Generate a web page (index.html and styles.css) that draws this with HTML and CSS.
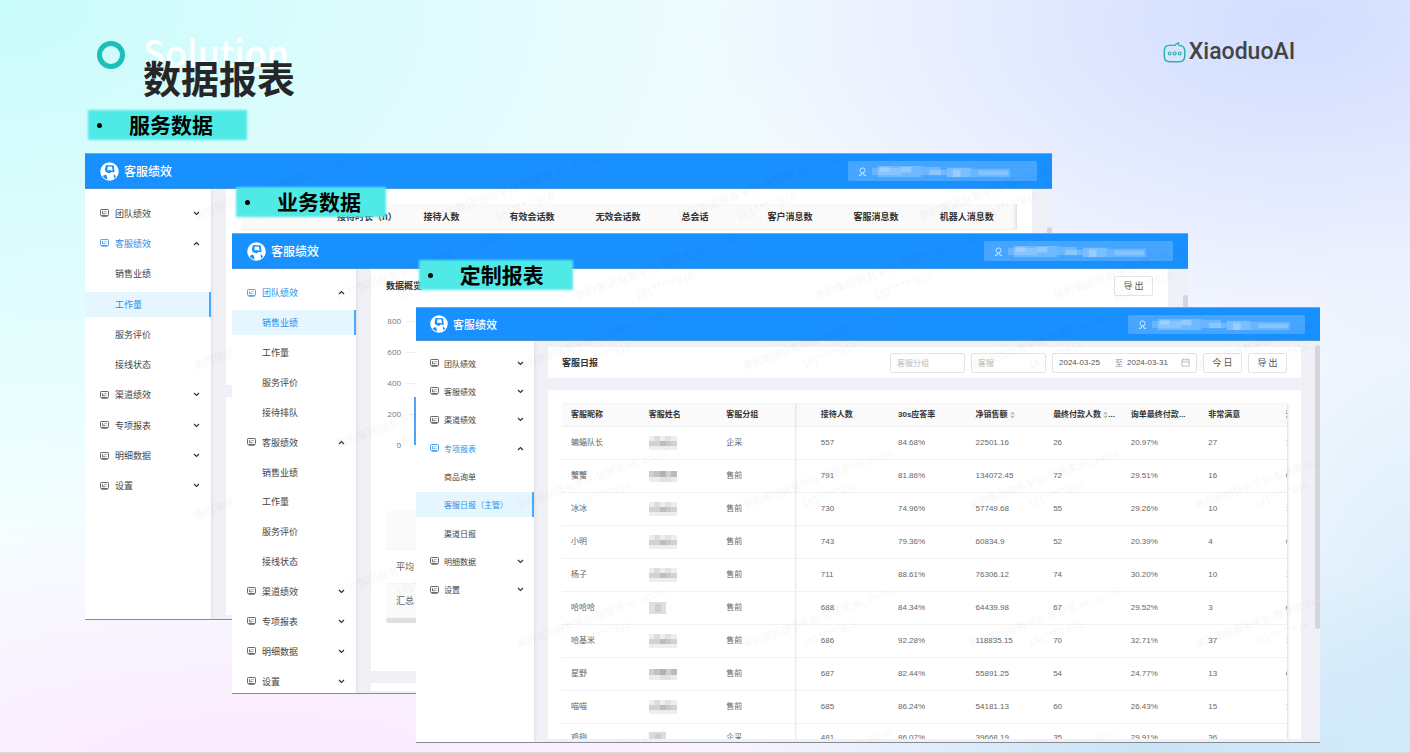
FILE: index.html
```html
<!DOCTYPE html>
<html lang="zh-CN">
<head>
<meta charset="utf-8">
<title>数据报表</title>
<link rel="stylesheet" href="styles.css">
</head>
<body>
<svg class="defs" aria-hidden="true">
  <symbol id="i-menu" viewBox="0 0 18 16"><rect x="1" y="1" width="16" height="12" rx="1.5" fill="none" stroke="currentColor" stroke-width="1.6"/><path d="M5 4v6M5 9.6h5M8 7l2-2.5M12 4v2M12 8v2M3 15.2h12" fill="none" stroke="currentColor" stroke-width="1.4"/></symbol>
  <symbol id="i-down" viewBox="0 0 8 6"><path d="M1 1.2l3 3 3-3" fill="none" stroke="currentColor" stroke-width="1.4"/></symbol>
  <symbol id="i-up" viewBox="0 0 8 6"><path d="M1 4.8l3-3 3 3" fill="none" stroke="currentColor" stroke-width="1.4"/></symbol>
  <symbol id="i-user" viewBox="0 0 10 10"><circle cx="5" cy="3.8" r="2.8" fill="none" stroke="currentColor"/><path d="M1 9.3h2.3L4 6.6M9 9.3H6.700L6 6.600" fill="none" stroke="currentColor"/></symbol>
  <symbol id="i-brand" viewBox="0 0 20 20"><circle cx="10" cy="10" r="9.700" fill="#fff"/><path d="M6.300 3.200l8.200.5.9 7.200-3.700-.3-1.500 1.600-4.200-1.600-.9-2.800z" fill="#1890ff"/><path d="M8.200 4.700l4.400.4.7 4-3-.6-2.500.5z" fill="#fff"/><path d="M2.800 14.800l3.300-1.600 1.100 1.500.6 3.800c-2.100-.6-3.900-1.900-5-3.700zM14.200 12.600l2.700 2.300c-.6.900-1.300 1.600-2.100 2.200z" fill="#1890ff"/></symbol>
  <symbol id="i-cal" viewBox="0 0 10 10"><rect x="1" y="2" width="8" height="7" fill="none" stroke="currentColor"/><path d="M1 4.500h8M3 .5v2M7 .5v2" stroke="currentColor"/></symbol>
  <symbol id="i-sort" viewBox="0 0 5 8"><path d="M0 3.200L2.500.5 5 3.200zM0 4.800L2.500 7.500 5 4.800z" fill="#bbb"/></symbol>
  <symbol id="m-wide" viewBox="0 0 28 14"><rect width="28" height="14" fill="#eee"/><rect x="5" width="6" height="5" fill="#ddd"/><rect x="16" width="6" height="5" fill="#e2e2e2"/><rect y="5" width="28" height="5" fill="#d2d2d2"/><rect x="11" y="5" width="6" height="5" fill="#bdbdbd"/><rect x="17" y="5" width="5" height="5" fill="#c8c8c8"/></symbol>
  <symbol id="m-dark" viewBox="0 0 28 14"><rect y="2" width="28" height="6" fill="#cfcfcf"/><rect x="5" y="2" width="6" height="6" fill="#c2c2c2"/><rect x="11" y="2" width="6" height="6" fill="#b2b2b2"/><rect x="22" y="2" width="6" height="6" fill="#bbb"/><rect y="8" width="28" height="5" fill="#ececec"/><rect x="11" y="8" width="11" height="5" fill="#e1e1e1"/></symbol>
  <symbol id="m-short" viewBox="0 0 28 14"><rect y="1" width="17" height="12" fill="#dedede"/><rect x="6" y="3" width="6" height="8" fill="#cecece"/></symbol>
  <symbol id="m-user" viewBox="0 0 140 12" preserveAspectRatio="none"><g fill="#fff"><rect x="6" width="44" height="12" opacity=".22"/><rect y="2" width="30" height="8" opacity=".18"/><rect x="8" y="1" width="10" height="5" opacity=".2"/><rect x="30" y="1" width="10" height="6" opacity=".25"/><rect x="50" y="1" width="20" height="9" opacity=".2"/><rect x="58" y="4" width="18" height="6" opacity=".22"/><rect x="76" y="2" width="24" height="10" opacity=".28"/><rect x="82" y="4" width="8" height="8" opacity=".25"/><rect x="100" y="3" width="40" height="9" opacity=".18"/><rect x="108" y="5" width="30" height="5" opacity=".2"/></g></symbol>
  <pattern id="wm-a" x="102" y="-8" width="242" height="150" patternUnits="userSpaceOnUse"><g transform="translate(8 75) rotate(-20)"><text class="wm-text wm-large">美的集团自有平台-智慧家:ex_zousc</text><text class="wm-text wm-large" x="56" y="21">181*****816</text></g></pattern>
  <pattern id="wm-b" x="98" y="-8" width="239" height="148" patternUnits="userSpaceOnUse"><g transform="translate(8 75) rotate(-20)"><text class="wm-text wm-large">美的集团自有平台-智慧家:ex_zousc</text><text class="wm-text wm-large" x="56" y="21">181*****816</text></g></pattern>
  <pattern id="wm-c" x="95" y="-8" width="226" height="139" patternUnits="userSpaceOnUse"><g transform="translate(8 71) rotate(-20)"><text class="wm-text">美的集团自有平台-智慧家:ex_zousc</text><text class="wm-text" x="56" y="19">181*****816</text></g></pattern>
</svg>

<main class="slide">
  <header class="slide-head">
    <span class="ring"></span>
    <div class="titles">
      <p class="ghost">Solution</p>
      <h1>数据报表</h1>
    </div>
    <div class="logo">
      <svg class="logo-mark" viewBox="0 0 24 22" aria-hidden="true"><path d="M6.500 3.500h6C13.500 2 14.700 1.200 16.200.9c-.3 1 0 2 .8 2.600 4 .2 5.700 2.300 5.700 6v5.200c0 4-2 6-5.800 6H7.200c-4 0-5.900-2-5.900-6V9.500c0-3.800 1.700-6 5.200-6z" fill="none" stroke="#28b2ad" stroke-width="1.500"/><g fill="none" stroke="#28b2ad" stroke-width="1.200"><circle cx="7" cy="12" r="1.500"/><circle cx="12.200" cy="12" r="1.500"/><circle cx="17.400" cy="12" r="1.500"/></g></svg>
      <span>XiaoduoAI</span>
    </div>
  </header>

  <section class="window win-a">
    <header class="bar"><svg class="brand"><use href="#i-brand"/></svg><h2>客服绩效</h2><div class="user"><svg class="user-icon"><use href="#i-user"/></svg><svg class="user-mask"><use href="#m-user"/></svg></div></header>
    <div class="body">
      <nav class="side">
        <ul class="menu">
          <li><a href="#"><svg class="mi"><use href="#i-menu"/></svg>团队绩效<svg class="arrow"><use href="#i-down"/></svg></a></li>
          <li><a href="#" class="open"><svg class="mi"><use href="#i-menu"/></svg>客服绩效<svg class="arrow"><use href="#i-up"/></svg></a></li>
          <li><a href="#" class="sub">销售业绩</a></li>
          <li><a href="#" class="sub active">工作量</a></li>
          <li><a href="#" class="sub">服务评价</a></li>
          <li><a href="#" class="sub">接线状态</a></li>
          <li><a href="#"><svg class="mi"><use href="#i-menu"/></svg>渠道绩效<svg class="arrow"><use href="#i-down"/></svg></a></li>
          <li><a href="#"><svg class="mi"><use href="#i-menu"/></svg>专项报表<svg class="arrow"><use href="#i-down"/></svg></a></li>
          <li><a href="#"><svg class="mi"><use href="#i-menu"/></svg>明细数据<svg class="arrow"><use href="#i-down"/></svg></a></li>
          <li><a href="#"><svg class="mi"><use href="#i-menu"/></svg>设置<svg class="arrow"><use href="#i-down"/></svg></a></li>
        </ul>
      </nav>
      <div class="content">
        <div class="card card-sessions">
          <table class="sessions">
            <thead><tr><th class="first">接待时长（h）</th><th>接待人数</th><th>有效会话数</th><th>无效会话数</th><th>总会话</th><th>客户消息数</th><th>客服消息数</th><th class="last">机器人消息数</th></tr></thead>
          </table>
        </div>
        <div class="card card-rest"></div>
      </div>
      <div class="rail"><i class="thumb"></i></div>
    </div>
    <svg class="watermark" aria-hidden="true"><rect x="102" width="100%" height="100%" fill="url(#wm-a)"/></svg>
  </section>

  <section class="window win-b">
    <header class="bar"><svg class="brand"><use href="#i-brand"/></svg><h2>客服绩效</h2><div class="user"><svg class="user-icon"><use href="#i-user"/></svg><svg class="user-mask"><use href="#m-user"/></svg></div></header>
    <div class="body">
      <nav class="side">
        <ul class="menu">
          <li><a href="#" class="open"><svg class="mi"><use href="#i-menu"/></svg>团队绩效<svg class="arrow"><use href="#i-up"/></svg></a></li>
          <li><a href="#" class="sub active">销售业绩</a></li>
          <li><a href="#" class="sub">工作量</a></li>
          <li><a href="#" class="sub">服务评价</a></li>
          <li><a href="#" class="sub">接待排队</a></li>
          <li><a href="#"><svg class="mi"><use href="#i-menu"/></svg>客服绩效<svg class="arrow"><use href="#i-up"/></svg></a></li>
          <li><a href="#" class="sub">销售业绩</a></li>
          <li><a href="#" class="sub">工作量</a></li>
          <li><a href="#" class="sub">服务评价</a></li>
          <li><a href="#" class="sub">接线状态</a></li>
          <li><a href="#"><svg class="mi"><use href="#i-menu"/></svg>渠道绩效<svg class="arrow"><use href="#i-down"/></svg></a></li>
          <li><a href="#"><svg class="mi"><use href="#i-menu"/></svg>专项报表<svg class="arrow"><use href="#i-down"/></svg></a></li>
          <li><a href="#"><svg class="mi"><use href="#i-menu"/></svg>明细数据<svg class="arrow"><use href="#i-down"/></svg></a></li>
          <li><a href="#"><svg class="mi"><use href="#i-menu"/></svg>设置<svg class="arrow"><use href="#i-down"/></svg></a></li>
        </ul>
      </nav>
      <div class="content">
        <div class="card card-overview">
          <div class="overview-head"><h3>数据概览</h3><button type="button" class="btn">导 出</button></div>
          <div class="chart">
            <ul class="axis"><li>800</li><li>600</li><li>400</li><li>200</li><li>0</li></ul>
            <div class="plot"><i class="column"></i></div>
          </div>
          <table class="summary">
            <tr class="blank"><td></td></tr>
            <tr><td>平均</td></tr>
            <tr class="tint"><td>汇总</td></tr>
          </table>
          <div class="hscroll"></div>
        </div>
        <div class="card card-rest"></div>
      </div>
      <div class="rail"><i class="thumb"></i></div>
    </div>
    <svg class="watermark" aria-hidden="true"><rect x="98" width="100%" height="100%" fill="url(#wm-b)"/></svg>
  </section>

  <section class="window win-c">
    <header class="bar"><svg class="brand"><use href="#i-brand"/></svg><h2>客服绩效</h2><div class="user"><svg class="user-icon"><use href="#i-user"/></svg><svg class="user-mask"><use href="#m-user"/></svg></div></header>
    <div class="body">
      <nav class="side">
        <ul class="menu">
          <li><a href="#"><svg class="mi"><use href="#i-menu"/></svg>团队绩效<svg class="arrow"><use href="#i-down"/></svg></a></li>
          <li><a href="#"><svg class="mi"><use href="#i-menu"/></svg>客服绩效<svg class="arrow"><use href="#i-down"/></svg></a></li>
          <li><a href="#"><svg class="mi"><use href="#i-menu"/></svg>渠道绩效<svg class="arrow"><use href="#i-down"/></svg></a></li>
          <li><a href="#" class="open"><svg class="mi"><use href="#i-menu"/></svg>专项报表<svg class="arrow"><use href="#i-up"/></svg></a></li>
          <li><a href="#" class="sub">商品询单</a></li>
          <li><a href="#" class="sub active">客服日报（主管）</a></li>
          <li><a href="#" class="sub">渠道日报</a></li>
          <li><a href="#"><svg class="mi"><use href="#i-menu"/></svg>明细数据<svg class="arrow"><use href="#i-down"/></svg></a></li>
          <li><a href="#"><svg class="mi"><use href="#i-menu"/></svg>设置<svg class="arrow"><use href="#i-down"/></svg></a></li>
        </ul>
      </nav>
      <div class="content">
        <form class="card filters">
          <h3>客服日报</h3>
          <input class="field" type="text" placeholder="客服分组" aria-label="客服分组">
          <input class="field" type="text" placeholder="客服" aria-label="客服">
          <div class="range"><input type="text" value="2024-03-25" aria-label="开始日期"><span>至</span><input class="end" type="text" value="2024-03-31" aria-label="结束日期"><svg class="cal"><use href="#i-cal"/></svg></div>
          <button type="button" class="btn">今 日</button>
          <button type="button" class="btn">导 出</button>
        </form>
        <div class="card card-table">
          <div class="table-clip">
          <table class="daily">
            <colgroup><col class="c"><col class="c"><col class="c"><col class="c-wide"><col class="c"><col class="c"><col class="c"><col class="c"><col class="c"><col></colgroup>
            <thead><tr><th>客服昵称</th><th>客服姓名</th><th>客服分组</th><th class="edge">接待人数</th><th>30s应答率</th><th>净销售额 <svg class="sort"><use href="#i-sort"/></svg></th><th>最终付款人数 <svg class="sort"><use href="#i-sort"/></svg>...</th><th>询单最终付款...</th><th>非常满意</th><th>满意</th></tr></thead>
            <tbody>
              <tr><td>蝙蝠队长</td><td><svg class="mask"><use href="#m-wide"/></svg></td><td>企采</td><td class="edge">557</td><td>84.68%</td><td>22501.16</td><td>26</td><td>20.97%</td><td>27</td><td>1</td></tr>
              <tr><td>蟹蟹</td><td><svg class="mask"><use href="#m-dark"/></svg></td><td>售前</td><td class="edge">791</td><td>81.86%</td><td>134072.45</td><td>72</td><td>29.51%</td><td>16</td><td>0</td></tr>
              <tr><td>冰冰</td><td><svg class="mask"><use href="#m-wide"/></svg></td><td>售前</td><td class="edge">730</td><td>74.96%</td><td>57749.68</td><td>55</td><td>29.26%</td><td>10</td><td>1</td></tr>
              <tr><td>小明</td><td><svg class="mask"><use href="#m-wide"/></svg></td><td>售前</td><td class="edge">743</td><td>79.36%</td><td>60834.9</td><td>52</td><td>20.39%</td><td>4</td><td>0</td></tr>
              <tr><td>杨子</td><td><svg class="mask"><use href="#m-wide"/></svg></td><td>售前</td><td class="edge">711</td><td>88.61%</td><td>76306.12</td><td>74</td><td>30.20%</td><td>10</td><td>1</td></tr>
              <tr><td>哈哈哈</td><td><svg class="mask"><use href="#m-short"/></svg></td><td>售前</td><td class="edge">688</td><td>84.34%</td><td>64439.98</td><td>67</td><td>29.52%</td><td>3</td><td>0</td></tr>
              <tr><td>哈基米</td><td><svg class="mask"><use href="#m-wide"/></svg></td><td>售前</td><td class="edge">686</td><td>92.28%</td><td>118835.15</td><td>70</td><td>32.71%</td><td>37</td><td>1</td></tr>
              <tr><td>星野</td><td><svg class="mask"><use href="#m-dark"/></svg></td><td>售前</td><td class="edge">687</td><td>82.44%</td><td>55891.25</td><td>54</td><td>24.77%</td><td>13</td><td>0</td></tr>
              <tr><td>喵喵</td><td><svg class="mask"><use href="#m-wide"/></svg></td><td>售前</td><td class="edge">685</td><td>86.24%</td><td>54181.13</td><td>60</td><td>26.43%</td><td>15</td><td>1</td></tr>
              <tr class="cut"><td>鸡翅</td><td><svg class="mask"><use href="#m-short"/></svg></td><td>企采</td><td class="edge">481</td><td>86.07%</td><td>39668.19</td><td>35</td><td>29.91%</td><td>36</td><td>1</td></tr>
            </tbody>
          </table>
          </div>
        </div>
      </div>
      <div class="rail"><i class="thumb"></i></div>
    </div>
    <svg class="watermark" aria-hidden="true"><rect x="95" width="100%" height="100%" fill="url(#wm-c)"/></svg>
  </section>

  <ul class="tags">
    <li class="tag tag-a"><span>服务数据</span></li>
    <li class="tag tag-b"><span>业务数据</span></li>
    <li class="tag tag-c"><span>定制报表</span></li>
  </ul>
</main>
</body>
</html>
```
FILE: styles.css
```css
* { box-sizing: border-box; }
body, h1, h2, h3, p, ul { margin: 0; padding: 0; }
ul { list-style: none; }
a { color: inherit; text-decoration: none; }
body { font-family: "Noto Sans CJK SC", sans-serif; color: #333; }
button, input { font-family: inherit; }
.defs { position: absolute; width: 0; height: 0; }

.slide {
  position: relative;
  min-height: 100vh;
  overflow: hidden;
  border-bottom: 1px solid #dcdcdc;
  background:
    radial-gradient(ellipse 420px 220px at 82% 102%, #c3e3f7, rgba(200, 230, 248, 0) 100%),
    radial-gradient(ellipse 240px 420px at 101% 88%, #d6ecfa, rgba(214, 236, 250, 0) 100%),
    radial-gradient(ellipse 600px 340px at 92% 3%, #d2ddfe, rgba(216, 225, 254, 0) 100%),
    radial-gradient(ellipse 860px 560px at 0 0, #c9fbfb, rgba(210, 253, 253, 0) 100%),
    radial-gradient(ellipse 900px 260px at 18% 102%, #fce9ff, rgba(252, 236, 255, 0) 100%),
    linear-gradient(90deg, #f6ffff, #f6f8ff);
}

.slide-head { display: flex; align-items: flex-start; padding: 29px 8% 0 97px; }
.ring { width: 28px; height: 28px; margin: 12px 18px 0 0; border: 5px solid #1dc0b9; border-radius: 50%; }
.titles { display: grid; }
.ghost { grid-area: 1 / 1; color: #fff; font-size: 36px; font-weight: 500; line-height: 44px; }
h1 { grid-area: 1 / 1; margin-top: 24px; position: relative; color: #262626; font-size: 38px; font-weight: 700; line-height: 48px; }
.logo { display: flex; align-items: center; gap: 3px; margin: 9px 2px 0 auto; color: #444; font: 500 23px/28px Roboto, sans-serif; }
.logo-mark { width: 23px; height: 21px; }

.tag { position: absolute; z-index: 5; height: 30px; padding-left: 41px; color: #000; font-size: 21px; font-weight: 700; line-height: 28px; }
.tag::before { content: ""; position: absolute; inset: 0; z-index: -1; background: #50eae6; filter: blur(1px); }
.tag::after { content: ""; position: absolute; left: 9px; top: 13px; width: 5px; height: 5px; border-radius: 50%; background: #000; }
.tag-a { left: 88px; top: 110px; width: 159px; }
.tag-b { left: 16.74%; top: 187px; width: 150px; }
.tag-c { left: 29.7%; top: 260px; width: 154px; }

.window { position: absolute; display: flex; flex-direction: column; overflow: hidden; border-bottom: 1px solid #888b92; background: #f0f1f6; }
.win-a { left: 6.03%; top: 153px; width: 68.6%; height: 467px; --side: 126px; --pad: 15px; --fs: 9px; --gutter: 15px; --rail: 20px; --rows: 303px; --top: 9px; --bar: 36px; }
.win-b { left: 16.46%; top: 233px; width: 67.8%; height: 461px; --side: 124px; --pad: 15px; --fs: 9px; --gutter: 15px; --rail: 20px; --rows: 418px; --top: 9px; --bar: 36px; }
.win-c { left: 29.51%; top: 307px; width: 64.11%; height: 436px; --side: 118px; --pad: 14px; --fs: 8px; --gutter: 14px; --rail: 19px; --rows: 255px; --top: 8px; --bar: 34px; }

.bar { display: flex; align-items: center; flex: none; height: var(--bar); padding: 0 15px; border-top: 1px solid #6cacdf; border-bottom: 1px solid #4c97d8; background: #1890ff; color: #fff; }
.brand { width: 19px; height: 19px; margin-right: 5px; }
h2 { font-size: 12px; font-weight: 500; line-height: 18px; }
.win-c .bar { padding-left: 14px; }
.win-c .brand { width: 18px; height: 18px; }
.win-c h2 { font-size: 11px; }
.user { display: flex; align-items: center; gap: 5px; width: 189px; height: 20px; margin-left: auto; padding: 0 10px; border-radius: 2px; background: rgba(255, 255, 255, .2); }
.win-c .user { width: 177px; height: 19px; }
.user-icon { flex: none; width: 9px; height: 9px; color: #d8ecff; }
.user-mask { width: 138px; height: 11px; }

.body { display: flex; flex: 1; min-height: 0; }
.side { flex: none; width: var(--side); padding-top: var(--top); background: #fff; box-shadow: 1px 0 3px rgba(0, 0, 0, .08); }
.menu { display: grid; grid-auto-rows: 1fr; align-items: center; height: var(--rows); font-size: var(--fs); }
.menu a { display: flex; align-items: center; height: 25px; padding: 0 11px 0 var(--pad); color: #444; }
.menu .sub { padding-left: calc(var(--pad) + 15px); }
.menu .open { color: #2a8fe6; }
.menu .active { border-right: 2px solid #4aa7fb; background: #e6f6ff; color: #2a8fe6; }
.win-c .menu a { padding-right: 10px; }
.mi { flex: none; width: 9px; height: 8px; margin-right: 6px; }
.win-c .mi { margin-right: 5px; }
.win-c .menu .sub { padding-left: 28px; padding-right: 0; }
.arrow { width: 7px; height: 5px; margin-left: auto; color: #333; }

.content { display: flex; flex: 1; flex-direction: column; min-width: 0; margin-left: var(--gutter); }
.card { background: #fff; }
.rail { display: flex; flex: none; justify-content: flex-end; width: var(--rail); }
.thumb { width: 5px; border-radius: 3px; background: #d5d6dc; }
.win-a .thumb { height: 160px; margin-top: 38px; }
.win-b .thumb { height: 160px; margin-top: 26px; }
.win-c .thumb { height: 284px; margin-top: 4px; }

.card-sessions { height: 196px; padding: 15px 15px 0; }
.sessions { width: 100%; height: 26px; border-collapse: collapse; table-layout: fixed; box-shadow: inset -4px 0 4px -3px rgba(0, 0, 0, .15); background: #fafafa; }
.sessions th { padding: 0; border-bottom: 1px solid #eee; font-size: 9px; font-weight: 700; line-height: 14px; text-align: left; white-space: nowrap; }
.sessions .first { width: 23.5%; padding-left: 96px; }
.sessions .last { width: 10%; }
.win-a .card-rest { flex: 1; margin: 12px 0 4px; }

.card-overview { height: 402px; padding: 7px 15px 0; }
.overview-head { display: flex; align-items: center; justify-content: space-between; }
h3 { font-size: 9px; font-weight: 700; line-height: 14px; }
.btn { width: 39px; height: 20px; padding: 0; border: 1px solid #e4e4e4; border-radius: 2px; background: #fff; color: #555; font-size: 9px; line-height: 16px; }
.chart { display: flex; height: 138px; margin-top: 18px; }
.axis { display: flex; flex-direction: column; justify-content: space-between; width: 15px; color: #777; font: 8px/14px "Open Sans", sans-serif; text-align: right; }
.plot { display: flex; flex: 1; align-items: flex-end; margin: 7px 0 7px 5px; padding-left: 8px; background: repeating-linear-gradient(#f0f0f0 0 1px, transparent 1px 31px); }
.column { width: 24px; height: 48px; background: #4aa7fb; }
.summary { width: 100%; margin-top: 59px; border-collapse: collapse; color: #666; font-size: 9px; }
.summary td { height: 34px; padding: 0 10px; }
.summary .blank td { height: 38px; }
.summary .blank, .summary .tint { background: #fafafa; }
.summary tr { border-bottom: 1px solid #f3f3f3; }
.hscroll { height: 5px; border-radius: 3px; background: #dfdfdf; }
.win-b .card-rest { height: 8px; margin-top: 12px; }

.filters { display: flex; align-items: center; gap: 6px; height: 31px; margin-top: 6px; padding: 0 14px; }
.filters h3 { margin-right: auto; }
.field { width: 75px; height: 20px; padding: 0 6px; border: 1px solid #e4e4e4; border-radius: 2px; background: #fff; font-size: 8px; }
.field::placeholder { color: #bbb; opacity: 1; }
.range { display: flex; align-items: center; gap: 4px; width: 145px; height: 20px; padding: 0 6px; border: 1px solid #e4e4e4; border-radius: 2px; color: #888; font-size: 8px; }
.range input { flex: none; width: 52px; padding: 0; border: 0; background: none; color: #555; font: 8px "Liberation Sans", sans-serif; }
.range .end { flex: 1; min-width: 0; }
.cal { flex: none; width: 9px; height: 9px; color: #bbb; }

.card-table { flex: 1; min-height: 0; margin: 12px 0 3px; padding: 14px 14px 0; overflow: hidden; }
.table-clip { overflow: hidden; box-shadow: 1px 0 2px rgba(0, 0, 0, .14); }
.daily { width: 100%; border-collapse: collapse; table-layout: fixed; color: #666; font: 8px/12px "Liberation Sans", "Noto Sans CJK SC", sans-serif; }
.c { width: 10.7%; }
.c-wide { width: 13%; }
.daily th, .daily td { padding: 0 0 0 9px; border-bottom: 1px solid #f2f2f2; text-align: left; white-space: nowrap; }
.daily th { height: 22px; background: #fafafa; color: #333; font-weight: 700; }
.daily td { height: 33px; }
.daily .cut td { height: 30px; }
.daily .edge { padding-left: 26px; box-shadow: inset 3px 0 2px -2px rgba(0, 0, 0, .12); }
.sort { width: 5px; height: 8px; vertical-align: middle; }
.mask { display: block; width: 28px; height: 14px; }

.watermark { position: absolute; inset: 0; width: 100%; height: 100%; pointer-events: none; }
.wm-text { fill: #000; fill-opacity: .035; font: 10px "Noto Sans CJK SC", sans-serif; }
.wm-large { font-size: 11px; }
```
